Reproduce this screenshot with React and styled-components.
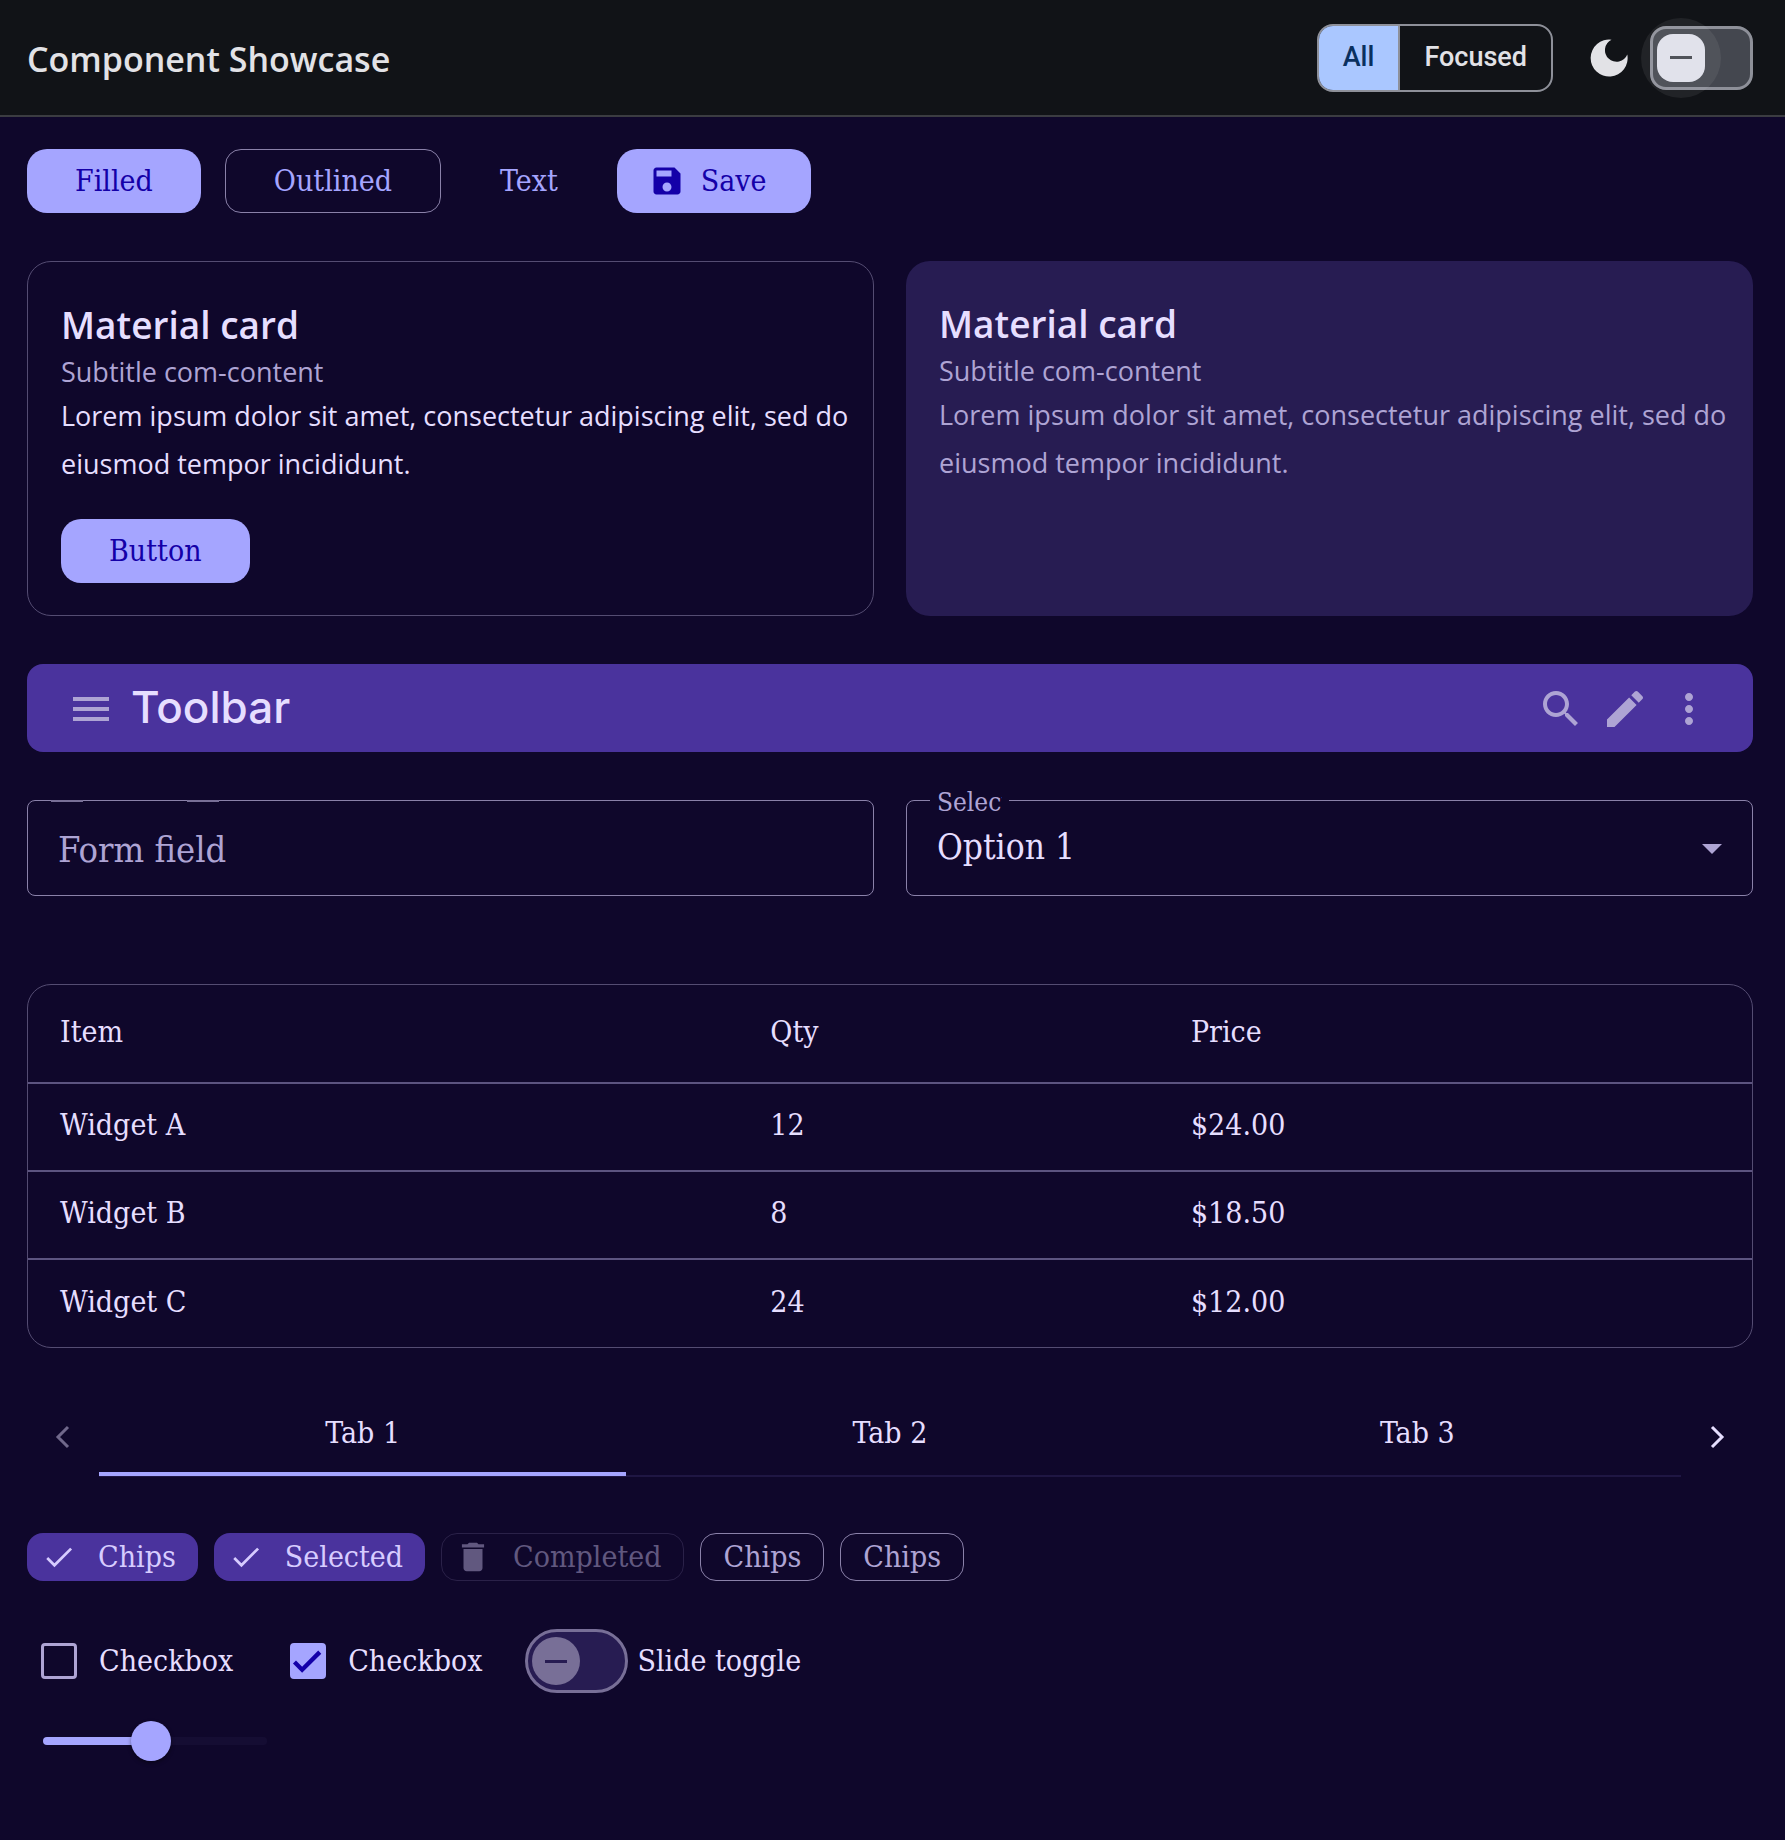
import { useState } from "react";
import styled, { createGlobalStyle, css } from "styled-components";

const serif = `"DejaVu Serif Condensed", "DejaVu Serif", serif`;
const sans = `"Open Sans", "Noto Sans", sans-serif`;

const colors = {
  bg: "#0f072b",
  header: "#111317",
  primary: "#a5a5ff",
  onPrimary: "#1400a8",
  text: "#e6deff",
  muted: "#aea4d4",
  outline: "#786f97",
  outlineBright: "#8a81a9",
  outlineSoft: "#544c72",
  surface: "#271c52",
  container: "#4a339d",
};

const GlobalStyle = createGlobalStyle`
  *, *::before, *::after {
    box-sizing: border-box;
  }

  body {
    margin: 0;
    background: ${colors.bg};
    color: ${colors.text};
    font-family: ${serif};
    font-size: 30px;
    line-height: 40px;
  }

  button, input, select {
    margin: 0;
    font: inherit;
    color: inherit;
  }

  button {
    cursor: pointer;
  }
`;

const Header = styled.header`
  display: flex;
  align-items: center;
  min-height: 117px;
  padding: 0 32px 0 27px;
  background: ${colors.header};
  border-bottom: 2px solid #3b3c41;
  color: #e2e2e6;
`;

const HeaderTitle = styled.h1`
  flex: 1;
  margin: 0;
  padding-top: 2px;
  font-family: ${sans};
  font-size: 34px;
  font-weight: 600;
`;

const ToggleGroup = styled.div`
  display: flex;
  height: 68px;
  border: 2px solid #8e9099;
  border-radius: 16px;
  overflow: hidden;
`;

const ToggleOption = styled.button`
  padding: 0 24px 2px;
  border: 0;
  border-left: ${({ $first }) => ($first ? "0" : "2px solid #8e9099")};
  background: ${({ $active }) => ($active ? "#aac7ff" : "transparent")};
  color: ${({ $active }) => ($active ? "#0a305f" : "#e2e2e6")};
  font-family: Roboto, sans-serif;
  font-size: 27px;
  font-weight: 500;
`;

const ThemeButton = styled.button`
  display: flex;
  padding: 0;
  margin: 0 22px 0 37px;
  border: 0;
  background: none;
`;

const Switch = styled.input.attrs({ type: "checkbox", role: "switch" })`
  appearance: none;
  position: relative;
  display: flex;
  align-items: center;
  flex: none;
  width: 103px;
  height: 64px;
  padding: 0 4px;
  border: 3px solid ${({ $neutral }) => ($neutral ? "#8e9099" : colors.outline)};
  border-radius: ${({ $neutral }) => ($neutral ? 16 : 32)}px;
  background: ${({ $neutral }) => ($neutral ? "#44474f" : colors.surface)};
  cursor: pointer;

  &::before {
    content: "";
    width: 48px;
    height: 48px;
    border-radius: ${({ $neutral }) => ($neutral ? "16px" : "50%")};
    background: ${({ $neutral }) =>
      $neutral
        ? "linear-gradient(#44474f, #44474f) center / 22px 3px no-repeat #e1e2ec"
        : `linear-gradient(${colors.surface}, ${colors.surface}) center / 22px 3px no-repeat ${colors.outline}`};
  }

  &:checked {
    justify-content: flex-end;
  }

  ${({ $neutral }) =>
    $neutral &&
    css`
      &::after {
        content: "";
        position: absolute;
        left: -12px;
        top: -11px;
        width: 80px;
        height: 80px;
        border-radius: 50%;
        background: rgba(226, 226, 230, 0.08);
      }
    `}
`;

const Page = styled.main`
  display: flex;
  flex-direction: column;
  gap: 48px;
  padding: 32px 32px 64px 27px;
`;

const ButtonRow = styled.div`
  display: flex;
  flex-wrap: wrap;
  gap: 24px;
`;

const Button = styled.button`
  display: inline-flex;
  align-items: center;
  align-self: flex-start;
  gap: 16px;
  height: 64px;
  padding: 0 48px;
  border: 0;
  border-radius: 20px;
  background: ${colors.primary};
  color: ${colors.onPrimary};

  ${({ $variant }) =>
    $variant === "outlined" &&
    css`
      border: 1px solid ${colors.outlineBright};
      border-radius: 16px;
      background: transparent;
      color: ${colors.primary};
    `}

  ${({ $variant }) =>
    $variant === "text" &&
    css`
      padding: 0 35px;
      background: transparent;
      color: ${colors.primary};
    `}

  ${({ $icon }) => $icon && "padding: 0 44px 0 32px;"}
`;

const TwoColumns = styled.div`
  display: grid;
  grid-template-columns: 1fr 1fr;
  gap: 32px;
`;

const Card = styled.article`
  display: flex;
  flex-direction: column;
  min-height: 355px;
  padding: 32px 24px 32px 33px;
  border: ${({ $filled }) => ($filled ? "0" : `1px solid ${colors.outlineSoft}`)};
  border-radius: 24px;
  background: ${({ $filled }) => ($filled ? colors.surface : "transparent")};
  color: ${({ $filled }) => ($filled ? colors.muted : colors.text)};
  font-family: ${sans};
`;

const CardTitle = styled.h2`
  margin: 7px 0 3px;
  color: ${colors.text};
  font-size: 37px;
  font-weight: 600;
  line-height: 48px;
`;

const CardSubtitle = styled.p`
  margin: 0;
  color: ${colors.muted};
  font-size: 27px;
`;

const CardText = styled.p`
  margin: 0 0 31px;
  font-size: 27px;
  line-height: 48px;
`;

const CardButton = styled(Button)`
  font-family: ${serif};
`;

const Toolbar = styled.div`
  display: flex;
  align-items: center;
  gap: 16px;
  min-height: 88px;
  padding: 2px 40px 0;
  border-radius: 16px;
  background: ${colors.container};
`;

const ToolbarTitle = styled.h2`
  flex: 1;
  margin: 0;
  padding-bottom: 4px;
  font-family: Inter, sans-serif;
  font-size: 44px;
  font-weight: 500;
`;

const IconButton = styled.button`
  display: flex;
  padding: 0;
  border: 0;
  background: none;
  color: ${colors.muted};
`;

const Fields = styled(TwoColumns)`
  margin-bottom: 40px;
`;

const Field = styled.div`
  position: relative;
  display: flex;
`;

const TextInput = styled.input`
  width: 100%;
  height: 96px;
  padding: 2px 30px 0;
  border: 1px solid ${colors.outlineBright};
  border-radius: 8px;
  background: transparent;
  font-size: 36px;

  &::placeholder {
    color: ${colors.muted};
    opacity: 1;
  }
`;

/* the two brighter ends of the outline's label notch */
const Notch = styled.span`
  position: absolute;
  left: 24px;
  top: 0;
  width: 168px;
  height: 2px;
  border: solid ${colors.outline};
  border-width: 0 32px;
  pointer-events: none;
`;

const SelectBox = styled.select`
  appearance: none;
  width: 100%;
  height: 96px;
  padding: 0 64px 2px 30px;
  border: 1px solid ${colors.outlineBright};
  border-radius: 8px;
  background: transparent;
  font-size: 35px;
`;

const FloatingLabel = styled.label`
  position: absolute;
  left: 24px;
  top: -16px;
  width: 79px;
  padding: 0 7px;
  background: ${colors.bg};
  color: ${colors.muted};
  font-size: 26px;
  line-height: 36px;

  span {
    display: block;
    overflow: hidden;
  }
`;

const SelectArrow = styled.svg`
  position: absolute;
  right: 31px;
  top: 44px;
  pointer-events: none;
`;

const TableFrame = styled.div`
  border: 1px solid ${colors.outlineSoft};
  border-radius: 24px;
`;

const Table = styled.table`
  width: 100%;
  table-layout: fixed;
  border-collapse: collapse;
`;

const Th = styled.th`
  height: 98px;
  width: ${({ $width }) => $width};
  padding: 0 32px 4px;
  font-weight: 400;
  text-align: left;
`;

const Td = styled.td`
  height: 88px;
  padding: 0 32px 4px;
  border-top: 2px solid #5c5480;
`;

const Tabs = styled.nav`
  display: flex;
  align-items: center;
  margin: 4px 0 8px;
`;

const Pager = styled.button`
  display: flex;
  justify-content: center;
  width: 72px;
  padding: 0 0 4px;
  border: 0;
  background: none;

  &:disabled {
    opacity: 0.45;
  }
`;

const TabList = styled.div`
  display: flex;
  flex: 1;
  border-bottom: 2px solid #1f1643;
`;

const Tab = styled.button`
  flex: 1;
  height: 76px;
  margin-bottom: -1px;
  padding: 0 0 6px;
  border: 0;
  border-bottom: 4px solid ${({ $active }) => ($active ? colors.primary : "transparent")};
  background: none;
`;

const ChipRow = styled.div`
  display: flex;
  flex-wrap: wrap;
  gap: 16px;
`;

const Chip = styled.button`
  display: inline-flex;
  align-items: center;
  gap: 21px;
  height: 48px;
  padding: 0 22px;
  border: 1px solid ${colors.outlineBright};
  border-radius: 16px;
  background: transparent;
  color: ${colors.muted};

  ${({ $selected }) =>
    $selected &&
    css`
      padding-left: 16px;
      border: 0;
      background: ${colors.container};
      color: #d7ccff;
    `}

  &:disabled {
    padding-left: 12px;
    border-color: #2a2148;
    color: #61587f;
  }
`;

const Controls = styled.div`
  display: flex;
  flex-wrap: wrap;
  align-items: center;
  gap: 43px;
  min-height: 64px;
`;

const CheckLabel = styled.label`
  display: flex;
  align-items: center;
  gap: 22px;
  padding-left: 14px;
`;

const SwitchLabel = styled.label`
  display: flex;
  align-items: center;
  gap: 9px;
`;

const CheckFrame = styled.span`
  display: grid;
  place-items: center;

  > * {
    grid-area: 1 / 1;
  }

  svg {
    color: ${colors.onPrimary};
    pointer-events: none;
  }
`;

const CheckInput = styled.input.attrs({ type: "checkbox" })`
  appearance: none;
  width: 36px;
  height: 36px;
  border: 3px solid ${colors.muted};
  border-radius: 4px;

  &:checked {
    border-color: ${colors.primary};
    background: ${colors.primary};
  }
`;

const Slider = styled.input.attrs({ type: "range" })`
  appearance: none;
  width: 224px;
  height: 48px;
  margin: -24px 16px 0;
  background: transparent;

  &::-webkit-slider-runnable-track {
    height: 8px;
    border-radius: 4px;
    background: linear-gradient(
      to right,
      ${colors.primary} ${({ value }) => value}%,
      #150d33 ${({ value }) => value}%
    );
  }

  &::-webkit-slider-thumb {
    appearance: none;
    width: 40px;
    height: 40px;
    margin-top: -16px;
    border-radius: 50%;
    background: ${colors.primary};
    box-shadow: 0 2px 4px rgba(0, 0, 0, 0.4);
  }
`;

const Icon = ({ path, size = 48 }) => (
  <svg width={size} height={size} viewBox="0 0 24 24" fill="currentColor" aria-hidden="true">
    <path d={path} />
  </svg>
);

const CheckMark = ({ size = 34, stroke = 2.4 }) => (
  <svg width={size} height={size} viewBox="-2 -3 30 30" aria-hidden="true">
    <path
      d="M1.73 12.91 8.1 19.28 22.79 4.59"
      fill="none"
      stroke="currentColor"
      strokeWidth={stroke}
    />
  </svg>
);

const paths = {
  save: "M17 3H5c-1.11 0-2 .9-2 2v14c0 1.1.89 2 2 2h14c1.1 0 2-.9 2-2V7l-4-4zm-5 16c-1.66 0-3-1.34-3-3s1.34-3 3-3 3 1.34 3 3-1.34 3-3 3zm3-10H5V5h10v4z",
  menu: "M3 18h18v-2H3v2zm0-5h18v-2H3v2zm0-7v2h18V6H3z",
  search:
    "M15.5 14h-.79l-.28-.27C15.41 12.59 16 11.11 16 9.5 16 5.91 13.09 3 9.5 3S3 5.91 3 9.5 5.91 16 9.5 16c1.61 0 3.09-.59 4.23-1.57l.27.28v.79l5 4.99L20.49 19l-4.99-5zm-6 0C7.01 14 5 11.99 5 9.5S7.01 5 9.5 5 14 7.01 14 9.5 11.99 14 9.5 14z",
  edit: "M3 17.25V21h3.75L17.81 9.94l-3.75-3.75L3 17.25zM20.71 7.04c.39-.39.39-1.02 0-1.41l-2.34-2.34c-.39-.39-1.02-.39-1.41 0l-1.83 1.83 3.75 3.75 1.83-1.83z",
  more: "M12 8c1.1 0 2-.9 2-2s-.9-2-2-2-2 .9-2 2 .9 2 2 2zm0 2c-1.1 0-2 .9-2 2s.9 2 2 2 2-.9 2-2-.9-2-2-2zm0 6c-1.1 0-2 .9-2 2s.9 2 2 2 2-.9 2-2-.9-2-2-2z",
  trash: "M6 19c0 1.1.9 2 2 2h8c1.1 0 2-.9 2-2V7H6v12zM19 4h-3.5l-1-1h-5l-1 1H5v2h14V4z",
};

const rows = [
  { item: "Widget A", qty: 12, price: "$24.00" },
  { item: "Widget B", qty: 8, price: "$18.50" },
  { item: "Widget C", qty: 24, price: "$12.00" },
];

const tabs = ["Tab 1", "Tab 2", "Tab 3"];

const lorem =
  "Lorem ipsum dolor sit amet, consectetur adipiscing elit, sed do eiusmod tempor incididunt.";

const CheckField = ({ label, defaultChecked = false }) => {
  const [checked, setChecked] = useState(defaultChecked);

  return (
    <CheckLabel>
      <CheckFrame>
        <CheckInput checked={checked} onChange={() => setChecked(!checked)} />
        {checked ? <CheckMark size={36} stroke={3.6} /> : null}
      </CheckFrame>
      {label}
    </CheckLabel>
  );
};

const App = () => {
  const [view, setView] = useState("All");
  const [activeTab, setActiveTab] = useState(0);
  const [volume, setVolume] = useState(48);

  return (
    <>
      <GlobalStyle />
      <Header>
        <HeaderTitle>Component Showcase</HeaderTitle>
        <ToggleGroup>
          {["All", "Focused"].map((name, index) => (
            <ToggleOption
              key={name}
              $first={index === 0}
              $active={view === name}
              onClick={() => setView(name)}
            >
              {name}
            </ToggleOption>
          ))}
        </ToggleGroup>
        <ThemeButton aria-label="Dark theme">
          <svg width="38" height="38" viewBox="0 0 38 38" fill="currentColor">
            <path d="M21.5 .7A11.6 11.6 0 1 0 37.3 15.5A18.5 18.5 0 1 1 21.5 .7Z" />
          </svg>
        </ThemeButton>
        <Switch $neutral aria-label="Toggle theme" />
      </Header>

      <Page>
        <ButtonRow>
          <Button>Filled</Button>
          <Button $variant="outlined">Outlined</Button>
          <Button $variant="text">Text</Button>
          <Button $icon>
            <Icon path={paths.save} size={36} />
            Save
          </Button>
        </ButtonRow>

        <TwoColumns>
          <Card>
            <CardTitle>Material card</CardTitle>
            <CardSubtitle>Subtitle com-content</CardSubtitle>
            <CardText>{lorem}</CardText>
            <CardButton>Button</CardButton>
          </Card>
          <Card $filled>
            <CardTitle>Material card</CardTitle>
            <CardSubtitle>Subtitle com-content</CardSubtitle>
            <CardText>{lorem}</CardText>
          </Card>
        </TwoColumns>

        <Toolbar>
          <IconButton aria-label="Menu">
            <Icon path={paths.menu} />
          </IconButton>
          <ToolbarTitle>Toolbar</ToolbarTitle>
          <IconButton aria-label="Search">
            <Icon path={paths.search} />
          </IconButton>
          <IconButton aria-label="Edit">
            <Icon path={paths.edit} />
          </IconButton>
          <IconButton aria-label="More">
            <Icon path={paths.more} />
          </IconButton>
        </Toolbar>

        <Fields>
          <Field>
            <TextInput aria-label="Form field" placeholder="Form field" />
            <Notch />
          </Field>
          <Field>
            <SelectBox id="option" defaultValue="Option 1">
              <option>Option 1</option>
              <option>Option 2</option>
            </SelectBox>
            <FloatingLabel htmlFor="option">
              <span>Select</span>
            </FloatingLabel>
            <SelectArrow width="20" height="10" viewBox="0 0 20 10" fill={colors.muted}>
              <path d="M0 0h20L10 10z" />
            </SelectArrow>
          </Field>
        </Fields>

        <TableFrame>
          <Table>
            <thead>
              <tr>
                <Th $width="41.2%">Item</Th>
                <Th $width="24.4%">Qty</Th>
                <Th $width="34.4%">Price</Th>
              </tr>
            </thead>
            <tbody>
              {rows.map((row) => (
                <tr key={row.item}>
                  <Td>{row.item}</Td>
                  <Td>{row.qty}</Td>
                  <Td>{row.price}</Td>
                </tr>
              ))}
            </tbody>
          </Table>
        </TableFrame>

        <Tabs>
          <Pager disabled aria-label="Previous tabs">
            <svg width="16" height="24" viewBox="0 0 16 24" fill="none" stroke="currentColor" strokeWidth="3">
              <path d="M13 2 3 12l10 10" />
            </svg>
          </Pager>
          <TabList role="tablist">
            {tabs.map((tab, index) => (
              <Tab
                key={tab}
                role="tab"
                aria-selected={activeTab === index}
                $active={activeTab === index}
                onClick={() => setActiveTab(index)}
              >
                {tab}
              </Tab>
            ))}
          </TabList>
          <Pager aria-label="Next tabs">
            <svg width="16" height="24" viewBox="0 0 16 24" fill="none" stroke="currentColor" strokeWidth="3">
              <path d="m3 2 10 10L3 22" />
            </svg>
          </Pager>
        </Tabs>

        <ChipRow>
          <Chip $selected>
            <CheckMark />
            Chips
          </Chip>
          <Chip $selected>
            <CheckMark />
            Selected
          </Chip>
          <Chip disabled>
            <Icon path={paths.trash} size={38} />
            Completed
          </Chip>
          <Chip>Chips</Chip>
          <Chip>Chips</Chip>
        </ChipRow>

        <Controls>
          <CheckField label="Checkbox" />
          <CheckField label="Checkbox" defaultChecked />
          <SwitchLabel>
            <Switch />
            Slide toggle
          </SwitchLabel>
        </Controls>

        <Slider
          aria-label="Slider"
          value={volume}
          onChange={(event) => setVolume(Number(event.target.value))}
        />
      </Page>
    </>
  );
};

export default App;
